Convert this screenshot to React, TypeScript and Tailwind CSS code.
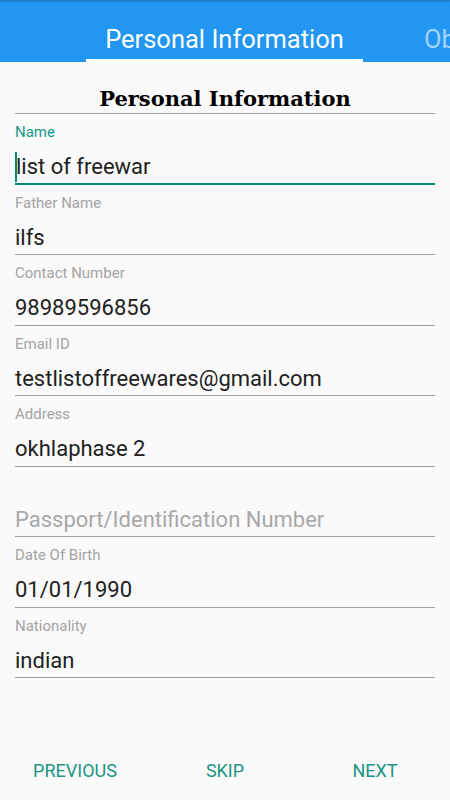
import React from "react";

type Field = { label: string; value: string; focused?: boolean; placeholder?: string };

const fields: Field[] = [
  { label: "Name", value: "list of freewar", focused: true },
  { label: "Father Name", value: "ilfs" },
  { label: "Contact Number", value: "98989596856" },
  { label: "Email ID", value: "testlistoffreewares@gmail.com" },
  { label: "Address", value: "okhlaphase 2" },
  { label: "", value: "", placeholder: "Passport/Identification Number" },
  { label: "Date Of Birth", value: "01/01/1990" },
  { label: "Nationality", value: "indian" },
];

function FormField({ field }: { field: Field }) {
  return (
    <div
      className={
        field.focused
          ? "flex flex-col pt-2 pb-[0.5px] border-b-2 border-[#00897b]"
          : "flex flex-col pt-2 pb-[1.5px] border-b border-[#9e9e9e]"
      }
    >
      <div
        className={
          field.focused
            ? "h-5 text-[15px] leading-5 text-[#17998a]"
            : "h-5 text-[15px] leading-5 text-[#a3a3a3]"
        }
      >
        {field.label}
      </div>
      <div className="mt-[10px] h-[30px] flex items-center text-[22px] leading-[30px] whitespace-nowrap">
        {field.focused && <span className="w-[2px] h-[30px] bg-[#00897b] -mr-[1px]" />}
        {field.value ? (
          <span className="text-[#212121]">{field.value}</span>
        ) : (
          <span className="text-[#a8a8a8]">{field.placeholder}</span>
        )}
      </div>
    </div>
  );
}

export default function App() {
  return (
    <div
      className="w-[450px] h-[800px] flex flex-col bg-[#fafafa] overflow-hidden"
      style={{ fontFamily: "Roboto, 'Liberation Sans', sans-serif" }}
    >
      {/* ── Tab bar ───────────────────────────────────────────── */}
      <div className="relative h-[62px] bg-[#2196f3] shrink-0 overflow-hidden">
        <div className="absolute top-0 left-0 right-0 h-[3px] bg-gradient-to-b from-[#1a78c2] to-[#2196f3]" />
        <div className="flex h-full ml-[86px] whitespace-nowrap">
          <div className="relative shrink-0 w-[277px] h-full flex items-center justify-center pt-[16px] text-[25.5px] text-white">
            Personal Information
            <div className="absolute bottom-0 left-0 right-0 h-[3px] bg-white" />
          </div>
          <div className="shrink-0 h-full flex items-center pt-[16px] pl-[61px] text-[25.5px] text-white/60">
            Ob
          </div>
        </div>
      </div>

      {/* ── Form ──────────────────────────────────────────────── */}
      <div className="px-[15px] flex flex-col">
        <div className="pt-[23px] border-b border-[#9e9e9e]">
          <h1
            className="text-center text-[21px] leading-7 font-bold text-black"
            style={{ fontFamily: "'DejaVu Serif', serif" }}
          >
            Personal Information
          </h1>
        </div>
        {fields.map((f, i) => (
          <FormField key={i} field={f} />
        ))}
      </div>

      {/* ── Footer buttons ────────────────────────────────────── */}
      <div className="mt-auto h-[60px] grid grid-cols-3 items-center text-center text-[18px] text-[#1b9585]">
        <span>PREVIOUS</span>
        <span>SKIP</span>
        <span>NEXT</span>
      </div>
    </div>
  );
}
